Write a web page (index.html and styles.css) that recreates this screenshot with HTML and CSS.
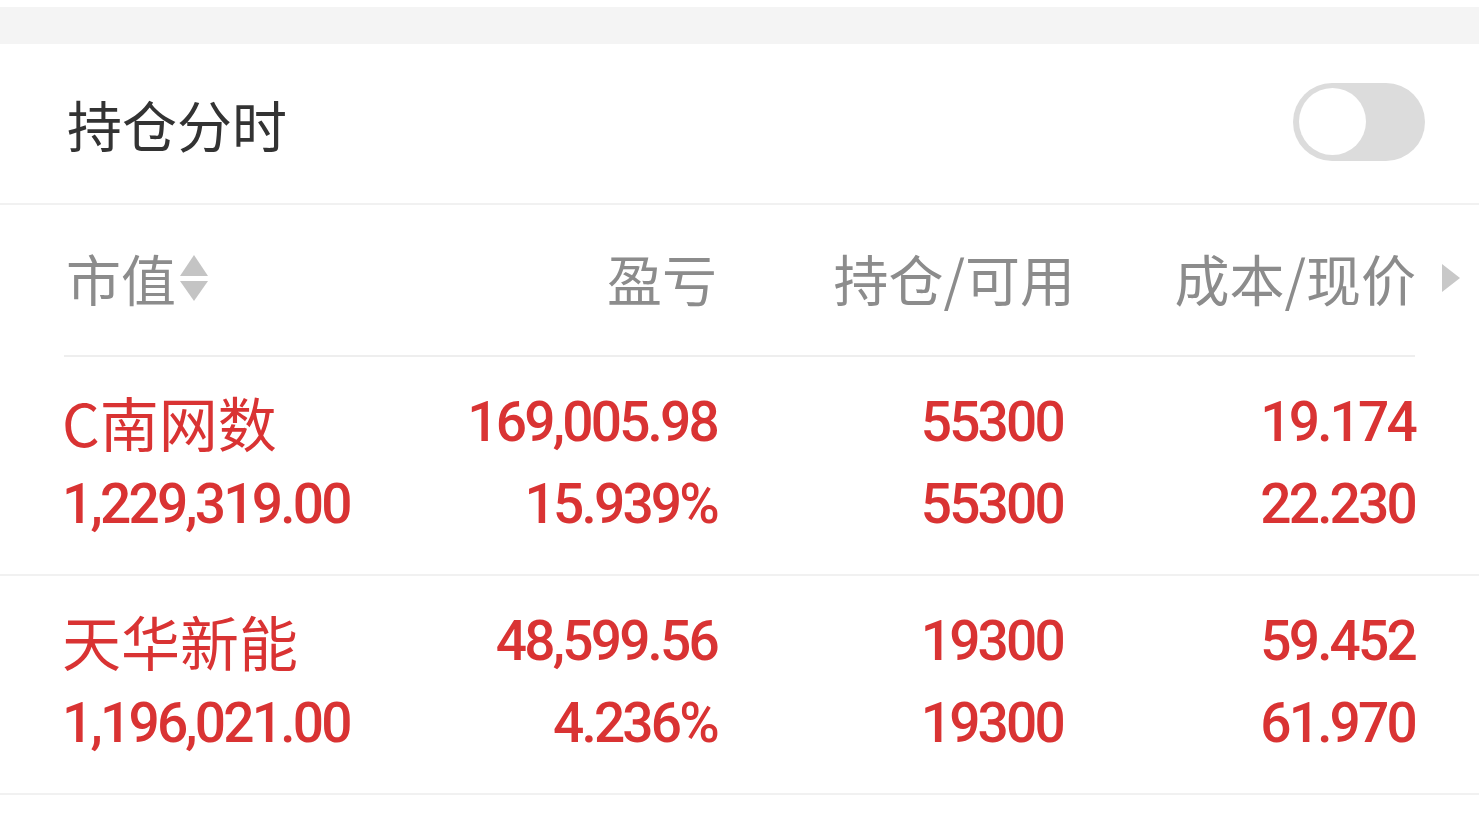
FILE: index.html
```html
<html>
<head>
  <meta charset="utf-8">
  <title>持仓</title>
  <link rel="stylesheet" href="styles.css">
</head>
<body>

<!-- верхняя серая полоса -->
<div class="top-band"></div>

<!-- переключатель -->
<div class="switch-bar">
  <span class="switch-label">持仓分时</span>
  <span class="toggle"><span class="toggle-knob"></span></span>
</div>

<!-- таблица позиций -->
<div class="positions">
  <div class="pos-head">
    <div class="head-cell head-first">市值
      <svg class="sort-icon" width="28" height="46" viewBox="0 0 28 46">
        <polygon points="14,0 28,21 0,21" fill="#c4c4c4"/>
        <polygon points="0,26 28,26 14,46" fill="#c4c4c4"/>
      </svg>
    </div>
    <div class="head-cell">盈亏</div>
    <div class="head-cell head-third">持仓/可用</div>
    <div class="head-cell head-last">成本/现价
      <svg class="more-icon" width="18" height="28" viewBox="0 0 18 28">
        <polygon points="0,0 18,14 0,28" fill="#c8c8c8"/>
      </svg>
    </div>
  </div>

  <div class="pos-row">
    <div class="cell cell-first">
      <span class="line name">C南网数</span>
      <span class="line num">1,229,319.00</span>
    </div>
    <div class="cell">
      <span class="line num">169,005.98</span>
      <span class="line num">15.939%</span>
    </div>
    <div class="cell">
      <span class="line num">55300</span>
      <span class="line num">55300</span>
    </div>
    <div class="cell">
      <span class="line num">19.174</span>
      <span class="line num">22.230</span>
    </div>
  </div>

  <div class="pos-row">
    <div class="cell cell-first">
      <span class="line name">天华新能</span>
      <span class="line num">1,196,021.00</span>
    </div>
    <div class="cell">
      <span class="line num">48,599.56</span>
      <span class="line num">4.236%</span>
    </div>
    <div class="cell">
      <span class="line num">19300</span>
      <span class="line num">19300</span>
    </div>
    <div class="cell">
      <span class="line num">59.452</span>
      <span class="line num">61.970</span>
    </div>
  </div>
</div>

</body>
</html>
```

FILE: styles.css
```css
body {
  margin: 0;
  padding: 0;
  background-color: #fff;
  font-family: "Noto Sans CJK SC", "Noto Sans", sans-serif;
  color: #333;
}

.top-band {
  margin-top: 7px;
  height: 37px;
  background-color: #f4f4f4;
}

/* переключатель */
.switch-bar {
  display: flex;
  align-items: center;
  justify-content: space-between;
  height: 159px;
  padding: 0 54px 0 67px;
  border-bottom: 2px solid #f1f1f1;
}

.switch-label {
  font-size: 55px;
  color: #333;
  margin-top: -2px;
}

.toggle {
  display: flex;
  align-items: center;
  width: 132px;
  height: 78px;
  border-radius: 39px;
  background-color: #dcdcdc;
  padding: 0 6px;
  box-sizing: border-box;
  margin-top: -4px;
}

.toggle-knob {
  width: 67px;
  height: 67px;
  border-radius: 50%;
  background-color: #fff;
}

/* таблица */
.pos-head,
.pos-row {
  display: grid;
  grid-template-columns: 330px 323px 346px 352px;
}

.pos-head {
  margin: 0 64px;
  height: 150px;
  align-items: center;
  border-bottom: 2px solid #eeeeee;
}

.head-cell {
  display: flex;
  align-items: center;
  justify-content: flex-end;
  font-size: 55px;
  color: #8c8c8c;
  margin-top: -6px;
}

.head-first {
  justify-content: flex-start;
  margin-left: 2px;
}

.head-third {
  margin-right: -12px;
}

.head-last {
  margin-right: -45px;
}

.sort-icon {
  margin-left: 4px;
  margin-top: 2px;
}

.more-icon {
  margin-left: 26px;
  margin-top: 2px;
}

.pos-row {
  padding: 24px 64px 29px;
  border-bottom: 2px solid #f1f1f1;
}

.cell {
  display: flex;
  flex-direction: column;
  align-items: flex-end;
  color: #d93333;
}

.cell-first {
  align-items: flex-start;
  margin-left: -2px;
}

.line {
  display: block;
  height: 82px;
  line-height: 82px;
  white-space: nowrap;
}

.name {
  font-size: 59px;
  font-family: "Noto Sans CJK SC", sans-serif;
}

.num {
  font-family: Roboto, "Liberation Sans", sans-serif;
  font-size: 55px;
  font-weight: 500;
  letter-spacing: -2.8px;
}
```
